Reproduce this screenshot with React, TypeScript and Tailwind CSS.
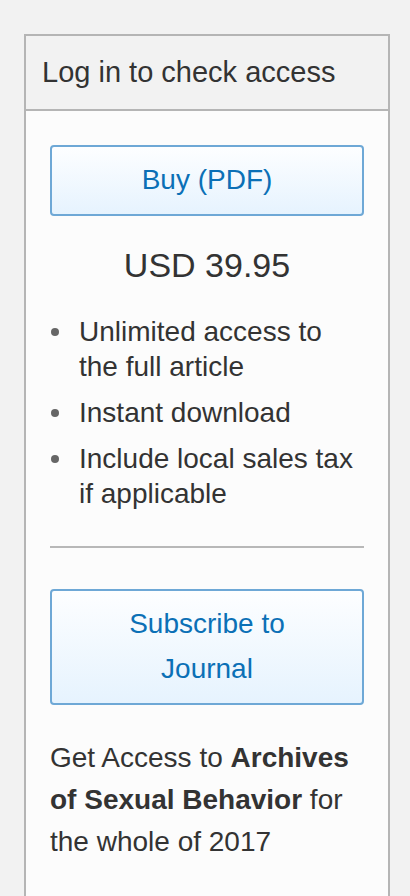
const font = { fontFamily: '"Liberation Sans", Arial, Helvetica, sans-serif' };

const features = [
  'Unlimited access to the full article',
  'Instant download',
  'Include local sales tax if applicable',
];

export default function App() {
  return (
    <div className="min-h-[896px] bg-[#f2f2f2] pt-[34px] pl-6 pr-5 text-[#333]" style={font}>
      <div className="border-2 border-b-0 border-[#b5b5b5] bg-[#fcfcfc] min-h-[862px]">
        {/* Header */}
        <div className="bg-[#f2f2f2] border-b-2 border-[#b5b5b5] px-4 py-[13px] text-[29px] leading-[47px]">
          Log in to check access
        </div>

        <div className="px-6 pt-[34px]">
          <BuyButton>Buy (PDF)</BuyButton>

          <div className="mt-[22px] text-center text-[34px] leading-[1.6]">USD 39.95</div>

          <ul className="mt-[22px] flex flex-col gap-[11px] text-[28px] leading-[35px]">
            {features.map((f) => (
              <li key={f} className="flex">
                <div className="w-[29px] shrink-0 pt-[14px]">
                  <div className="w-[8px] h-[8px] ml-[1px] rounded-full bg-[#666]" />
                </div>
                <span>{f}</span>
              </li>
            ))}
          </ul>

          <div className="mt-[35px] h-[2px] bg-[#b8b8b8]" />

          <div className="mt-[41px]">
            <BuyButton>Subscribe to Journal</BuyButton>
          </div>

          <p className="mt-[32px] text-[28px] leading-[42px]">
            Get Access to <b>Archives of Sexual Behavior</b> for the whole of 2017
          </p>
        </div>
      </div>
    </div>
  );
}

function BuyButton({ children }: { children: React.ReactNode }) {
  return (
    <button
      className="block w-full rounded-[4px] border-2 border-[#6ea8d6] bg-gradient-to-b from-[#fdfeff] to-[#e6f3fe] px-10 py-[11px] text-center text-[28px] leading-[1.6] text-[#0b70b6]"
      style={font}
    >
      {children}
    </button>
  );
}
